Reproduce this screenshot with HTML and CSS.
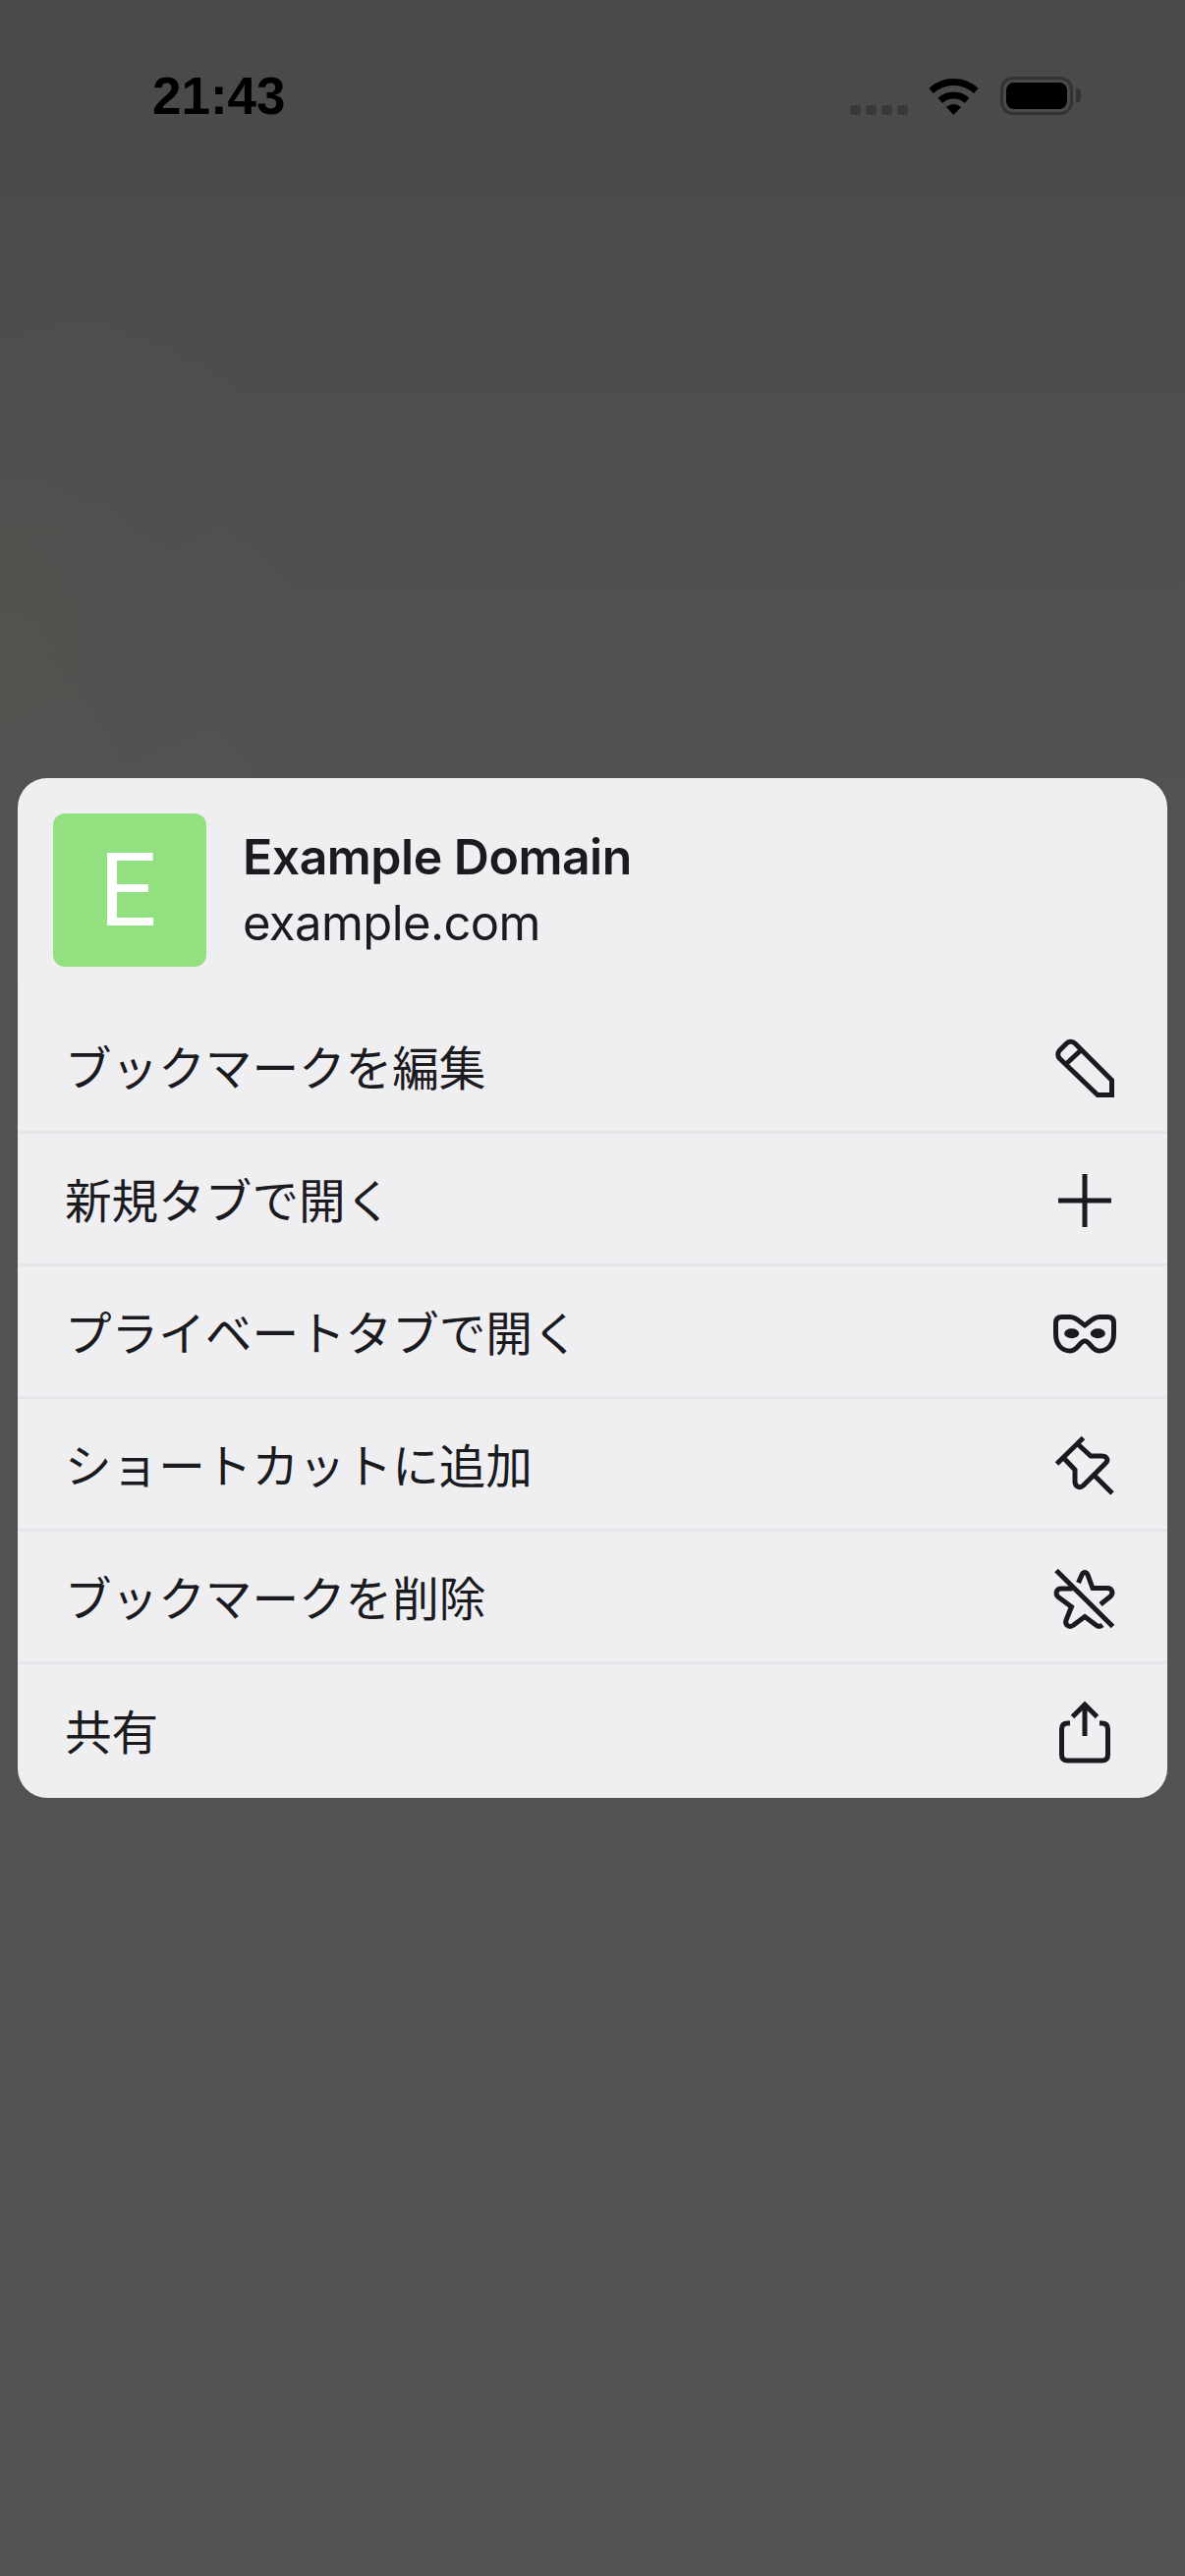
FILE: index.html
```html
<!DOCTYPE html>
<html lang="ja">
<head>
    <meta charset="UTF-8">
    <title>Bookmark menu</title>
    <link rel="stylesheet" href="styles.css">
</head>
<body>
<div class="status-bar">
    <div class="time">21:43</div>
    <div class="status-icons">
        <div class="signal"><span></span><span></span><span></span><span></span></div>
        <svg class="wifi" width="51" height="37" viewBox="0 0 51 37">
            <path d="M2.7 12.5A33.5 33.5 0 0 1 48.3 12.5" fill="none" stroke="#000" stroke-width="7"/>
            <path d="M11.9 22.4A20 20 0 0 1 39.1 22.4" fill="none" stroke="#000" stroke-width="7"/>
            <path d="M25.5 37L18 29A11 11 0 0 1 33 29Z" fill="#000"/>
        </svg>
        <div class="battery"><div class="battery-fill"></div></div>
    </div>
</div>

<div class="menu-card">
    <div class="menu-header">
        <div class="favicon">E</div>
        <div class="site-info">
            <div class="site-title">Example Domain</div>
            <div class="site-url">example.com</div>
        </div>
    </div>
    <div class="menu-row">
        <span>ブックマークを編集</span>
        <svg class="row-icon" viewBox="0 0 80 80"><path d="M53 67.5L14.5 30.5a6 6 0 0 1 0-8.5l7-7a6 6 0 0 1 8.5 0L67.5 52.5V67.5ZM35.5 22.5L21.5 35.5"/></svg>
    </div>
    <div class="menu-row">
        <span>新規タブで開く</span>
        <svg class="row-icon" viewBox="0 0 80 80"><path d="M40 13V67M13 40H67"/></svg>
    </div>
    <div class="menu-row">
        <span>プライベートタブで開く</span>
        <svg class="row-icon" viewBox="0 0 80 80">
            <path d="M40 32C35 28.5 31 23.5 25 23.5H16.5C12.5 23.5 10.5 25.5 10.5 29.5V41C10.5 51 16 58 25.5 58C32.5 58 35 48 40 48C45 48 47.5 58 54.5 58C64 58 69.5 51 69.5 41V29.5C69.5 25.5 67.5 23.5 63.5 23.5H55C49 23.5 45 28.5 40 32Z"/>
            <ellipse class="eye" cx="26.7" cy="40.3" rx="7.5" ry="5"/>
            <ellipse class="eye" cx="53.3" cy="40.3" rx="7.5" ry="5"/>
        </svg>
    </div>
    <div class="menu-row">
        <span>ショートカットに追加</span>
        <svg class="row-icon" viewBox="0 0 80 80"><path d="M11.5 38L38.5 11.5M19 32.5L30 44V56C30 61 35 63.5 38.5 60L61 37.5C65 33.5 62 30 57 30H46L33 18M50 50L68 68"/></svg>
    </div>
    <div class="menu-row">
        <span>ブックマークを削除</span>
        <svg class="row-icon" viewBox="0 0 80 80"><path d="M33.5 24L37 16C38.5 12.5 41.5 12.5 43 16L48 29.5H63C68 29.5 69.5 35 66 38L56 46M27.5 30H16C11 30 9.5 35.5 13 38.5L26.5 48.5L21 62C19.5 67 24 70 28 67.5L40 58.5L52 67.5C54 69 56 68.5 58 67M11 11.5L68.5 68.5"/></svg>
    </div>
    <div class="menu-row">
        <span>共有</span>
        <svg class="row-icon" viewBox="0 0 80 80"><path d="M25 30H22.5C18.5 30 16.5 32 16.5 36V62C16.5 66 18.5 68 22.5 68H57.5C61.5 68 63.5 66 63.5 62V36C63.5 32 61.5 30 57.5 30H55M40 12V43M27.5 23.5L40 11L52.5 23.5"/></svg>
    </div>
</div>
</body>
</html>
```

FILE: styles.css
```css
html, body {
    margin: 0;
    height: 100%;
}
body {
    width: 1206px;
    height: 2622px;
    overflow: hidden;
    box-sizing: border-box;
    padding: 0 18px;
    font-family: 'Inter', 'Noto Sans CJK JP', sans-serif;
    color: #1a1a1f;
    background:
        radial-gradient(ellipse 300px 400px at 0 620px, rgba(80, 100, 70, 0.16), rgba(80, 100, 70, 0) 100%),
        linear-gradient(#494949 0, #525252 800px, #525252 100%);
}
.status-bar {
    display: flex;
    justify-content: space-between;
    align-items: flex-end;
    height: 117px;
    padding: 0 96px 0 137px;
}
.time {
    font-family: 'Liberation Sans', sans-serif;
    font-size: 53px;
    font-weight: 700;
    line-height: 38px;
    color: #000;
}
.status-icons {
    display: flex;
    align-items: flex-end;
}
.signal {
    display: flex;
    gap: 5px;
    margin-right: 21px;
}
.signal span {
    width: 11px;
    height: 10px;
    border-radius: 3px;
    background-color: #383838;
}
.wifi {
    display: block;
    margin-right: 22px;
}
.battery {
    position: relative;
    box-sizing: border-box;
    width: 74px;
    height: 39px;
    padding: 3px;
    border: 3px solid #333;
    border-radius: 13px;
}
.battery:after {
    content: "";
    position: absolute;
    right: -11px;
    top: 9px;
    width: 5px;
    height: 14px;
    border-radius: 0 4px 4px 0;
    background-color: #333;
}
.battery-fill {
    height: 100%;
    border-radius: 8px;
    background-color: #000;
}
.menu-card {
    box-sizing: border-box;
    height: 1038px;
    margin-top: 675px;
    border-radius: 30px;
    background-color: #efeff2;
    overflow: hidden;
}
.menu-header {
    display: flex;
    align-items: center;
    height: 227px;
    box-sizing: border-box;
    padding: 36px 36px 35px;
}
.favicon {
    display: flex;
    align-items: center;
    justify-content: center;
    box-sizing: border-box;
    width: 156px;
    height: 156px;
    padding-right: 4px;
    border-radius: 12px;
    background-color: #92e080;
    color: #fff;
    font-family: 'Roboto', sans-serif;
    font-size: 104px;
    margin-right: 37px;
}
.site-title {
    font-size: 50px;
    font-weight: 600;
    letter-spacing: -0.5px;
    line-height: 66px;
    margin-bottom: 2px;
}
.site-url {
    font-size: 49px;
    letter-spacing: -0.6px;
    line-height: 66px;
}
.menu-row {
    display: flex;
    align-items: center;
    justify-content: space-between;
    box-sizing: border-box;
    height: 135px;
    padding: 4px 44px 0 48px;
    border-bottom: 3px solid #e6e6ea;
    font-size: 47.6px;
}
.menu-row span {
    margin-bottom: 6px;
}
.menu-row:last-child {
    border-bottom: none;
}
.row-icon {
    width: 80px;
    height: 80px;
    fill: none;
    stroke: #1a1a1f;
    stroke-width: 5;
}
.row-icon .eye {
    fill: #1a1a1f;
    stroke: none;
}
```
